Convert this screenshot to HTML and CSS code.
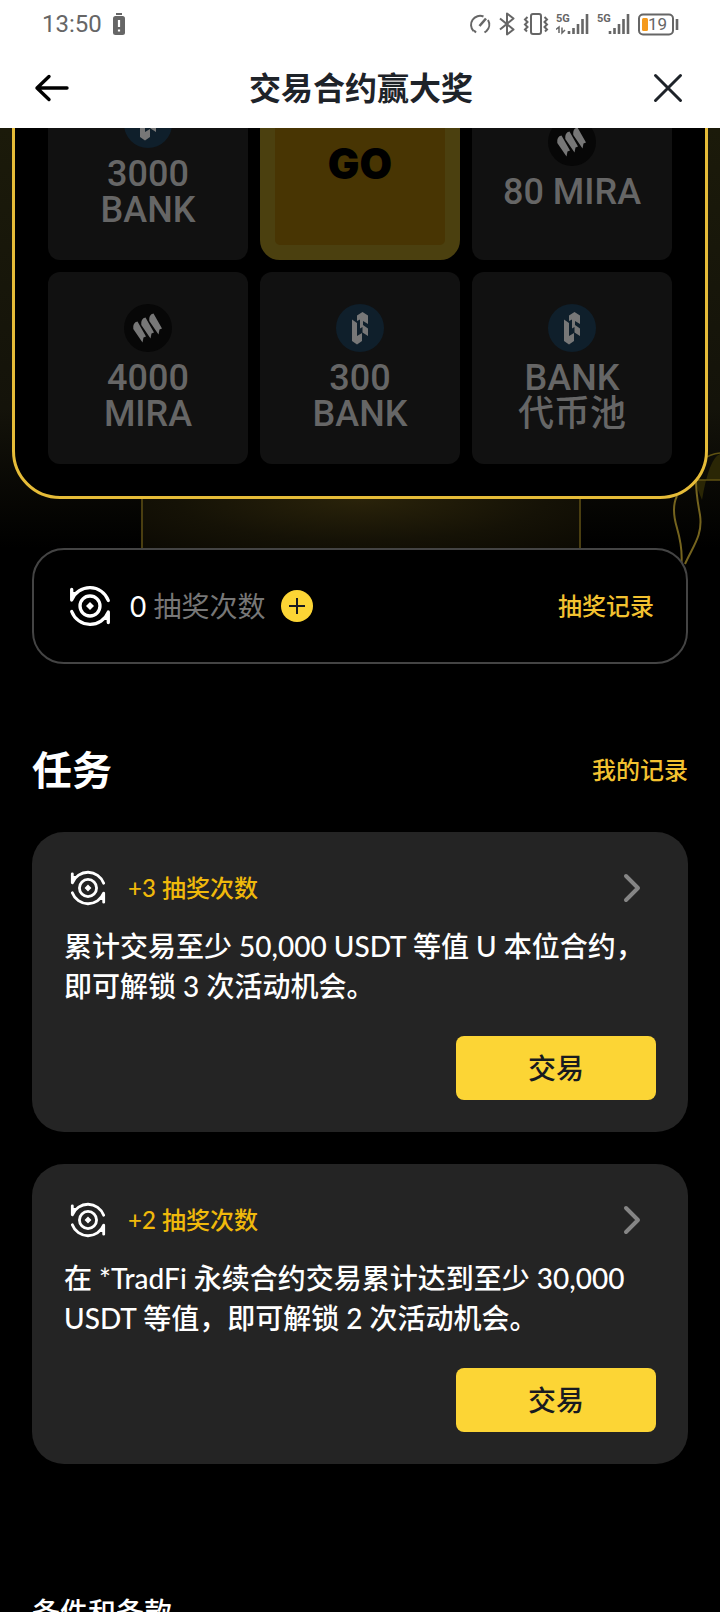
FILE: index.html
```html
<!DOCTYPE html>
<html lang="zh-CN">
<head>
<meta charset="utf-8">
<meta name="viewport" content="width=device-width, initial-scale=1">
<title>交易合约赢大奖</title>
<link rel="stylesheet" href="styles.css">
</head>
<body>
<svg class="defs" aria-hidden="true">
  <symbol id="bank" viewBox="0 0 48 48">
    <circle cx="24" cy="24" r="24" fill="#0f1f2b"/>
    <path fill="#777" d="M16 15.500L21 19V32L26 29V37L21 40.500L16 37zM21 11.500L26.500 8L32 11.500V20L27 17V21L32 24.500V32L26.500 28.500V23L24 24.500V15.500L21 17z"/>
  </symbol>
  <symbol id="mira" viewBox="0 0 48 48">
    <circle cx="24" cy="24" r="24" fill="#070707"/>
    <g fill="#777">
      <path id="blade" d="M9.300 25Q8.500 18.500 13.500 17.500L22 32.500L19.500 33.500L18.500 38.500z"/>
      <use href="#blade" x="8" y="-4"/>
      <use href="#blade" x="16" y="-8"/>
    </g>
  </symbol>
  <symbol id="spin" viewBox="0 0 48 48">
    <g fill="none" stroke="#fff" stroke-width="3.300" stroke-linecap="round" stroke-linejoin="round">
      <circle cx="24" cy="24" r="10"/>
      <path d="M5.700 7.500V18A19.600 19.600 0 0 1 42.300 18.500"/>
      <path d="M42.300 40.500V30A19.600 19.600 0 0 1 5.700 29.500"/>
    </g>
    <path fill="#fff" d="M24 20L28 24L24 28L20 24zM5.700 10V18L12 10zM42.300 38V30L36 38z"/>
  </symbol>
</svg>

<header class="top">
  <div class="status">
    <span class="clock">13:50</span>
    <svg width="14" height="24" viewBox="0 0 14 24"><rect x="4" y="1" width="6" height="2" fill="#666"/><rect x="1" y="4" width="12" height="19" rx="2.500" fill="#666"/><path d="M7 8v7M7 17.500v2" stroke="#fff" stroke-width="2.200"/></svg>
    <div class="status-icons">
      <svg width="22" height="24" viewBox="0 0 22 24" fill="none" stroke="#666" stroke-width="2"><path d="M14.500 4.500A9 9 0 0 0 4.500 19M7 20.500L5 18.500M19 8a9 9 0 0 1-1.500 11l-2 1.500"/><path d="M10.500 14L17 6.500" stroke-width="2.600"/></svg>
      <svg width="18" height="24" viewBox="0 0 18 24" fill="none" stroke="#666" stroke-width="2" stroke-linejoin="round"><path d="M2 6.500L15.500 17.500L9 22.500V1.500L15.500 6.500L2 17.500"/></svg>
      <svg width="26" height="24" viewBox="0 0 26 24" fill="none" stroke="#666" stroke-width="2"><rect x="8" y="2" width="10" height="20" rx="2"/><path d="M4.500 5L2 7.500L4.500 10L2 12.500L4.500 15L2 17.500L4 19.500M21.500 5L24 7.500L21.500 10L24 12.500L21.500 15L24 17.500L22 19.500"/></svg>
      <svg width="34" height="24" viewBox="0 0 34 24"><text x="0" y="10" class="net">5G</text><path d="M0 17.500L3 15V21M6 15.500V21L9 18" fill="none" stroke="#666" stroke-width="1.500"/><path d="M13 19v3M17.500 16v6M22 12v10M26.500 7v15M31 2v20" stroke="#666" stroke-width="2.600"/></svg>
      <svg width="34" height="24" viewBox="0 0 34 24"><text x="0" y="10" class="net">5G</text><path d="M13 19v3M17.500 16v6M22 12v10M26.500 7v15M31 2v20" stroke="#666" stroke-width="2.600"/></svg>
      <svg width="42" height="24" viewBox="0 0 42 24"><rect x="1" y="2.500" width="34" height="20" rx="4" fill="none" stroke="#666" stroke-width="2"/><rect x="4" y="6" width="6" height="13" rx="1.500" fill="#f59a1c"/><path d="M39 7v11" stroke="#666" stroke-width="2.600"/><text x="10" y="18" class="charge">19</text></svg>
    </div>
  </div>
  <div class="titlebar">
    <button class="icon-button" aria-label="返回"><svg width="36" height="32" viewBox="0 0 36 32" fill="none" stroke="#000" stroke-width="3.400" stroke-linecap="round" stroke-linejoin="round"><path d="M33 16H3M15 4.500L3 16L15 27.500"/></svg></button>
    <h1>交易合约赢大奖</h1>
    <button class="icon-button" aria-label="关闭"><svg width="32" height="32" viewBox="0 0 32 32" fill="none" stroke="#1e2329" stroke-width="3" stroke-linecap="round"><path d="M3.500 3.500L28.500 28.500M28.500 3.500L3.500 28.500"/></svg></button>
  </div>
</header>

<main>
  <section class="hero">
    <svg class="trace" width="160" height="300" viewBox="0 0 160 300" fill="none" aria-hidden="true">
      <path d="M142 100Q149 58 160 54V80H134z" fill="#2a2605"/>
      <path d="M142 60Q150 54 160 53M130 80H160" stroke="#5f5212" stroke-width="1.500"/>
      <path d="M117 96Q111 108 117 128C121 142 123 154 121 168" stroke="#75641e" stroke-width="2"/>
      <path d="M136 80C136 95 138 103 140 115C143 135 133 146 125 164" stroke="#75641e" stroke-width="2"/>
    </svg>
    <div class="board">
      <div class="cell"><svg class="coin"><use href="#bank"/></svg><span>3000<br>BANK</span></div>
      <button class="go">GO</button>
      <div class="cell"><svg class="coin"><use href="#mira"/></svg><span>80 MIRA</span></div>
      <div class="cell"><svg class="coin"><use href="#mira"/></svg><span>4000<br>MIRA</span></div>
      <div class="cell"><svg class="coin"><use href="#bank"/></svg><span>300<br>BANK</span></div>
      <div class="cell"><svg class="coin"><use href="#bank"/></svg><span>BANK<br>代币池</span></div>
    </div>
    <div class="glow"></div>
    <div class="chances">
      <svg class="spin"><use href="#spin"/></svg>
      <p>0 <span>抽奖次数</span></p>
      <button class="plus" aria-label="增加次数"><svg width="32" height="32" viewBox="0 0 32 32"><circle cx="16" cy="16" r="16" fill="#fcd535"/><path d="M16 8v16M8 16h16" stroke="#181a20" stroke-width="2"/></svg></button>
      <a class="link" href="#draws">抽奖记录</a>
    </div>
  </section>

  <section class="tasks">
    <div class="tasks-head">
      <h2>任务</h2>
      <a class="link" href="#mine">我的记录</a>
    </div>
    <article class="task">
      <div class="task-head">
        <svg class="spin" viewBox="-4 -4 56 56"><use href="#spin" width="48" height="48"/></svg>
        <span class="reward">+3 抽奖次数</span>
        <svg class="chevron" width="48" height="48" viewBox="0 0 48 48"><path d="M18 12L30 24L18 36"/></svg>
      </div>
      <p>累计交易至少 50,000 USDT 等值 U 本位合约，即可解锁 3 次活动机会。</p>
      <button class="trade">交易</button>
    </article>
    <article class="task">
      <div class="task-head">
        <svg class="spin" viewBox="-4 -4 56 56"><use href="#spin" width="48" height="48"/></svg>
        <span class="reward">+2 抽奖次数</span>
        <svg class="chevron" width="48" height="48" viewBox="0 0 48 48"><path d="M18 12L30 24L18 36"/></svg>
      </div>
      <p>在 *TradFi 永续合约交易累计达到至少 30,000 USDT 等值，即可解锁 2 次活动机会。</p>
      <button class="trade">交易</button>
    </article>
  </section>

  <h3 class="terms">条件和条款</h3>
</main>
</body>
</html>
```

FILE: styles.css
```css
* {
  box-sizing: border-box;
}

body {
  margin: 0;
  height: 100vh;
  display: flex;
  flex-direction: column;
  background: #000;
  color: #fff;
  font-family: Lato, "Noto Sans CJK SC", sans-serif;
}

h1, h2, h3, p {
  margin: 0;
}

button {
  border: 0;
  padding: 0;
  background: none;
  font-family: inherit;
  color: inherit;
}

svg {
  display: block;
  flex: none;
}

.defs {
  position: absolute;
  width: 0;
  height: 0;
}

/* Header */
.top {
  flex: none;
  background: #fff;
  color: #1e2329;
}

.status {
  display: flex;
  align-items: center;
  gap: 10px;
  height: 48px;
  padding: 0 40px 0 42px;
  font-family: Roboto, sans-serif;
}

.clock {
  color: #666;
  font-size: 24px;
}

.status-icons {
  display: flex;
  gap: 7px;
  margin-left: auto;
}

.net {
  font-size: 11px;
  font-weight: 700;
  fill: #666;
}

.charge {
  font-size: 17px;
  fill: #666;
}

.titlebar {
  display: flex;
  align-items: center;
  justify-content: space-between;
  height: 80px;
  padding: 0 36px 0 34px;
}

.titlebar h1 {
  font-size: 32px;
  font-weight: 700;
  line-height: 40px;
}

/* Prize board */
main {
  flex: 1;
  overflow-y: auto;
  scrollbar-width: none;
}

.hero {
  position: relative;
  overflow: hidden;
  padding: 0 12px;
  background: linear-gradient(#1b1a0a, #14130a 280px, #000 420px);
}

.board {
  position: relative;
  display: grid;
  grid-template-columns: repeat(3, 1fr);
  grid-auto-rows: 192px;
  gap: 12px;
  margin-top: -96px;
  padding: 33px 33px 32px;
  border: 3px solid #e6bc38;
  border-radius: 48px;
  background: #000;
}

.cell {
  display: flex;
  flex-direction: column;
  align-items: center;
  justify-content: center;
  gap: 8px;
  border-radius: 12px;
  background: #111;
  color: #666;
  font-family: Roboto, "Noto Sans CJK SC", sans-serif;
  font-size: 36px;
  font-weight: 500;
  line-height: 36px;
  text-align: center;
}

.coin {
  width: 48px;
  height: 48px;
}

.go {
  border: 15px solid #4b400f;
  border-radius: 20px;
  background: #483503;
  color: #000;
  font-family: Inter, sans-serif;
  font-size: 42px;
  font-weight: 900;
  line-height: 48px;
}

.glow {
  height: 49px;
  margin: 0 127px 0 129px;
  border: solid #4a3e10;
  border-width: 0 2px;
  background: radial-gradient(ellipse at 50% 0, #2a230a, #151206 60%, #0c0a03);
}

.trace {
  position: absolute;
  right: 0;
  top: 272px;
}

/* Remaining draws */
.chances {
  position: relative;
  display: flex;
  align-items: center;
  gap: 16px;
  height: 116px;
  margin: 0 20px;
  padding: 0 32px;
  border: 2px solid #444;
  border-radius: 32px;
  background: #000;
  font-size: 28px;
  line-height: 40px;
}

.chances p span {
  color: #777;
}

.spin {
  width: 48px;
  height: 48px;
}

.link {
  margin-left: auto;
  color: #f3c230;
  font-size: 24px;
  font-weight: 500;
  line-height: 32px;
  text-decoration: none;
}

/* Tasks */
.tasks {
  display: flex;
  flex-direction: column;
  gap: 32px;
  padding: 80px 32px 0;
}

.tasks-head {
  display: flex;
  align-items: center;
  padding-bottom: 4px;
}

.tasks-head h2 {
  font-size: 40px;
  font-weight: 700;
  line-height: 52px;
}

.task {
  display: flex;
  flex-direction: column;
  padding: 32px;
  border-radius: 32px;
  background: #242424;
}

.task-head {
  display: flex;
  align-items: center;
  gap: 16px;
}

.reward {
  color: #f0b90b;
  font-size: 24px;
  font-weight: 500;
  line-height: 32px;
}

.chevron {
  margin-left: auto;
  fill: none;
  stroke: #858585;
  stroke-width: 4;
  stroke-linecap: round;
  stroke-linejoin: round;
}

.task p {
  margin: 14px 0 30px;
  font-size: 28px;
  font-weight: 500;
  line-height: 40px;
}

.trade {
  align-self: flex-end;
  width: 200px;
  height: 64px;
  border-radius: 8px;
  background: #fcd535;
  color: #181a20;
  font-size: 28px;
  font-weight: 500;
  line-height: 40px;
}

.terms {
  padding: 128px 32px 40px;
  font-size: 28px;
  font-weight: 500;
  line-height: 40px;
}
```
